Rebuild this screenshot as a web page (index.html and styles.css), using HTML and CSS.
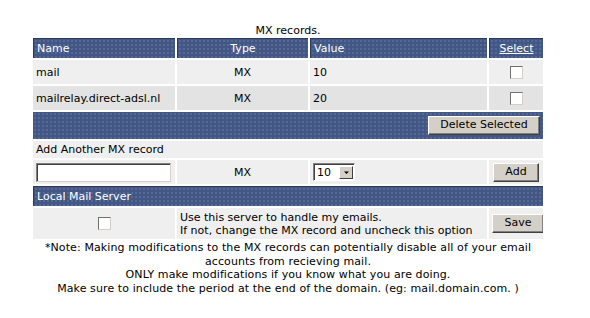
FILE: index.html
```html
<!DOCTYPE html>
<html>
<head>
<meta charset="utf-8">
<link rel="stylesheet" href="styles.css">
</head>
<body>
<div class="wrap">
  <div class="title">MX records.</div>
  <table class="mx">
    <colgroup>
      <col class="c-name"><col class="c-type"><col class="c-value"><col class="c-sel">
    </colgroup>
    <tr class="head">
      <td>Name</td>
      <td class="center">Type</td>
      <td>Value</td>
      <td class="center"><a href="#" class="sel-link">Select</a></td>
    </tr>
    <tr class="row light">
      <td>mail</td>
      <td class="center">MX</td>
      <td>10</td>
      <td class="center"><span class="cb"></span></td>
    </tr>
    <tr class="row dark">
      <td>mailrelay.direct-adsl.nl</td>
      <td class="center">MX</td>
      <td>20</td>
      <td class="center"><span class="cb"></span></td>
    </tr>
    <tr class="bar">
      <td colspan="4" class="right"><span class="btn btn-del">Delete Selected</span></td>
    </tr>
    <tr class="addlabel light">
      <td colspan="4">Add Another MX record</td>
    </tr>
    <tr class="addrow light">
      <td><span class="txt"></span></td>
      <td class="center">MX</td>
      <td><span class="select"><span class="sv">10</span><span class="sa"><svg width="7" height="4" viewBox="0 0 7 4"><path d="M1 0.5h5L3.5 3z" fill="#000"/></svg></span></span></td>
      <td class="center"><span class="btn btn-add">Add</span></td>
    </tr>
    <tr class="head local">
      <td colspan="4">Local Mail Server</td>
    </tr>
    <tr class="saverow light">
      <td class="center"><span class="cb"></span></td>
      <td colspan="2" class="msg">Use this server to handle my emails.<br>If not, change the MX record and uncheck this option</td>
      <td class="center"><span class="btn btn-save">Save</span></td>
    </tr>
  </table>
  <div class="note">*Note: Making modifications to the MX records can potentially disable all of your email<br>accounts from recieving mail.<br>ONLY make modifications if you know what you are doing.<br>Make sure to include the period at the end of the domain. (eg: mail.domain.com. )</div>
</div>
</body>
</html>
```
FILE: styles.css
```css
html, body {
  margin: 0;
  padding: 0;
  background: #ffffff;
}
body {
  font-family: Verdana, "DejaVu Sans", sans-serif;
  font-size: 11px;
  color: #000;
}
.wrap {
  width: 514px;
  padding-left: 31px;
  padding-top: 24px;
}
.title {
  text-align: center;
  line-height: 13px;
  height: 12px;
}
.mx {
  width: 514px;
  border-collapse: separate;
  border-spacing: 2px;
  table-layout: fixed;
  background: #ffffff;
}
.c-name { width: 142px; }
.c-type { width: 131px; }
.c-value { width: 177px; }
.c-sel { width: 54px; }
.mx td {
  padding: 0 3px;
  vertical-align: middle;
  white-space: nowrap;
  overflow: hidden;
  line-height: 13px;
}
.center { text-align: center; }
.right { text-align: right; }
.head td, .bar td {
  background-color: #435786;
  background-image: radial-gradient(circle, rgba(150,165,200,0.35) 0.6px, transparent 0.9px);
  background-size: 4px 4px;
  color: #ffffff;
}
.head td {
  height: 20px;
  border-top: 1px solid #2c3a5c;
  border-left: 1px solid #2c3a5c;
  box-sizing: border-box;
}
.sel-link { color: #ffffff; }
.light td { background: #efefef; }
.dark td { background: #e3e3e3; }
.row td { height: 24px; }
.bar td { height: 27px; padding-right: 3px; }
.addlabel td { height: 17px; }
.addrow td { height: 24px; }
.local td { height: 20px; }
.saverow td { height: 31px; }
.cb {
  display: inline-block;
  width: 11px;
  height: 11px;
  background: #ffffff;
  border-top: 1px solid #707070;
  border-left: 1px solid #707070;
  border-right: 1px solid #d4d0c8;
  border-bottom: 1px solid #d4d0c8;
  vertical-align: middle;
}
.btn {
  display: inline-block;
  box-sizing: border-box;
  height: 19px;
  line-height: 16px;
  background: #d4d0c8;
  color: #000;
  border-top: 1px solid #ffffff;
  border-left: 1px solid #ffffff;
  border-right: 1px solid #404040;
  border-bottom: 1px solid #404040;
  box-shadow: inset -1px -1px 0 #808080;
  text-align: center;
  vertical-align: middle;
}
.btn-del { width: 112px; }
.btn-add { width: 46px; }
.btn-save { width: 52px; }
.txt {
  display: inline-block;
  box-sizing: border-box;
  width: 135px;
  height: 19px;
  background: #fff;
  border-top: 1px solid #808080;
  border-left: 1px solid #808080;
  border-right: 1px solid #d4d0c8;
  border-bottom: 1px solid #d4d0c8;
  box-shadow: inset 1px 1px 0 #404040;
  vertical-align: middle;
}
.select {
  display: inline-flex;
  box-sizing: border-box;
  width: 42px;
  height: 18px;
  background: #fff;
  border-top: 1px solid #808080;
  border-left: 1px solid #808080;
  border-right: 1px solid #ffffff;
  border-bottom: 1px solid #ffffff;
  box-shadow: inset 1px 1px 0 #404040;
  vertical-align: middle;
  padding: 2px 1px 1px 2px;
  align-items: stretch;
}
.sv {
  flex: 1;
  line-height: 13px;
  padding-left: 1px;
}
.sa {
  width: 14px;
  box-sizing: border-box;
  background: #d4d0c8;
  border-top: 1px solid #ffffff;
  border-left: 1px solid #ffffff;
  border-right: 1px solid #404040;
  border-bottom: 1px solid #404040;
  display: flex;
  align-items: center;
  justify-content: center;
}
.note {
  text-align: center;
  line-height: 13.5px;
  letter-spacing: 0.1px;
}
```
